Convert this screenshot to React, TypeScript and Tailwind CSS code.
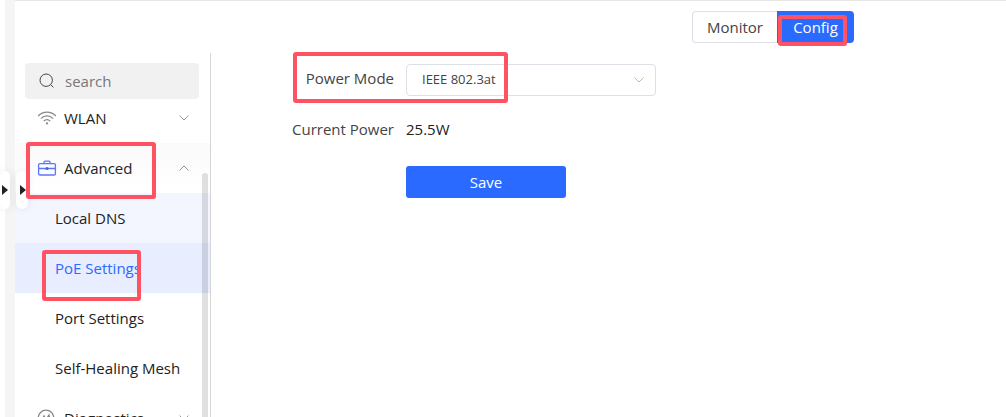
import React from "react";

const subItems = [
  { label: "Local DNS", className: "bg-[#f3f6ff] text-[#222]" },
  { label: "PoE Settings", className: "bg-[#e8edff] text-[#2b6aff]", marked: true },
  { label: "Port Settings", className: "text-[#222]" },
  { label: "Self-Healing Mesh", className: "text-[#222]" },
];

function Mark({ className }: { className: string }) {
  return (
    <span
      className={`pointer-events-none absolute z-20 rounded-[3px] border-4 border-[#ff5263] ${className}`}
    />
  );
}

function Chevron({ up, className }: { up?: boolean; className: string }) {
  return (
    <svg
      viewBox="0 0 12 8"
      fill="none"
      stroke="currentColor"
      className={className}
      aria-hidden="true"
    >
      <path d={up ? "M1.5 6.5 6 2l4.5 4.5" : "M1.5 1.5 6 6l4.5-4.5"} />
    </svg>
  );
}

function SearchIcon() {
  return (
    <svg viewBox="0 0 16 16" fill="none" stroke="#444" className="h-4 w-4 shrink-0" aria-hidden="true">
      <circle cx="7.2" cy="7.2" r="6.2" />
      <path d="m11.6 11.6 2.8 2.8" />
    </svg>
  );
}

function WifiIcon() {
  return (
    <svg viewBox="0 0 20 16" fill="none" stroke="#888" strokeWidth="1.3" className="h-4 w-5" aria-hidden="true">
      <path d="M1.2 6C6 .8 14 .8 18.8 6M3.9 8.6c3.4-3.6 8.8-3.6 12.2 0M6.7 11.1c1.9-1.9 4.7-1.9 6.6 0" />
      <circle cx="10" cy="13.4" r="1.1" fill="#888" stroke="none" />
    </svg>
  );
}

function BriefcaseIcon() {
  return (
    <svg viewBox="0 0 20 16" fill="none" stroke="#5b76ff" strokeWidth="1.3" className="h-4 w-5" aria-hidden="true">
      <rect x="1.6" y="3.6" width="16.8" height="11.4" rx="1.2" />
      <path d="M7 3.5V2.2q0-1 1-1h4q1 0 1 1v1.3M1.6 8.5h16.8" />
      <circle cx="10" cy="8.5" r="1.5" fill="#2b6aff" stroke="none" />
    </svg>
  );
}

function DiagnosticsIcon() {
  return (
    <svg viewBox="0 0 20 18" fill="none" stroke="#888" strokeWidth="1.3" className="h-[18px] w-5" aria-hidden="true">
      <circle cx="9" cy="9" r="7.8" />
      <path d="M4 10h1.5L7 7l2 3.5L12 6l1 4h1.5" />
    </svg>
  );
}

function Handle({ className }: { className: string }) {
  return (
    <button
      type="button"
      aria-label="Expand panel"
      className={`absolute top-[171px] z-10 flex h-[38px] items-center rounded-lg bg-white shadow-[0_0_8px_rgba(0,0,0,0.08)] ${className}`}
    >
      <svg viewBox="0 0 6 10" fill="#222" className="h-2.5 w-1.5" aria-hidden="true">
        <path d="M0 0 6 5 0 10z" />
      </svg>
    </button>
  );
}

function Sidebar() {
  return (
    <nav className="relative w-49 shrink-0 border-r border-[#d6d6d6] pt-2.5 text-[15px]">
      <label className="mr-[11px] ml-2.5 flex h-9 items-center gap-2.5 rounded bg-[#f1f1f1] px-3.5">
        <SearchIcon />
        <input
          type="text"
          placeholder="search"
          aria-label="search"
          className="w-full min-w-0 bg-transparent outline-none placeholder:text-[#777]"
        />
      </label>
      <button type="button" className="flex h-11 w-full items-center pr-5 pb-1.5 pl-[22px] text-[#222]">
        <WifiIcon />
        <span className="ml-[7px]">WLAN</span>
        <Chevron className="ml-auto h-2 w-3 text-[#8a98a8]" />
      </button>
      <div className="relative">
        <button type="button" className="flex h-[50px] w-full items-center bg-linear-to-b from-[#fafafa] to-white pr-5 pl-[22px] text-[#222]">
          <BriefcaseIcon />
          <span className="ml-[7px]">Advanced</span>
          <Chevron up className="ml-auto h-2 w-3 text-[#999]" />
        </button>
        <Mark className="-top-px left-[11px] h-[57px] w-[130px]" />
      </div>
      <ul>
        {subItems.map((item) => (
          <li key={item.label} className="relative">
            <a href="#" className={`flex h-[50px] items-center pl-10 ${item.className}`}>
              {item.label}
            </a>
            {item.marked && <Mark className="top-[7px] left-[27px] h-[51px] w-[99px]" />}
          </li>
        ))}
      </ul>
      <button type="button" className="flex h-[50px] w-full items-center pr-5 pl-[22px] text-[#222]">
        <DiagnosticsIcon />
        <span className="ml-[7px]">Diagnostics</span>
        <Chevron className="ml-auto h-2 w-3 text-[#999]" />
      </button>
      <div className="absolute top-[120px] right-0.5 bottom-0 w-1.5 rounded-t-full bg-black/12" />
    </nav>
  );
}

export default function App() {
  return (
    <div className="relative flex h-screen overflow-hidden bg-white pl-[5px] font-['Open_Sans','Noto_Sans',sans-serif] text-[15px]">
      <div className="w-2.5 shrink-0 bg-[#f5f5f5]" />
      <Handle className="left-0 w-2.5 pl-0.5" />
      <Handle className="left-4 w-3 pl-1" />
      <div className="flex min-w-0 flex-1 flex-col border-t border-[#e6e6e6]">
        <header className="flex h-[52px] shrink-0 justify-end pt-2.5 pr-38">
          <button
            type="button"
            className="h-8 w-[85px] rounded-l border border-r-0 border-[#dcdfe6] text-[#444]"
          >
            Monitor
          </button>
          <button type="button" className="relative h-8 w-[77px] rounded-r bg-[#2b6aff] text-white">
            Config
            <Mark className="top-1 left-px h-[31px] w-[69px]" />
          </button>
        </header>
        <div className="flex flex-1">
          <Sidebar />
          <main className="min-w-0 flex-1 pt-[11px]">
            <form className="grid grid-cols-[183px_1fr] items-center gap-x-3 gap-y-[19px] text-[#444]">
              <label htmlFor="power-mode" className="relative h-8 text-right leading-7">
                Power Mode
                <Mark className="-top-3 left-[82px] h-[51px] w-[215px]" />
              </label>
              <div className="relative w-[250px]">
                <select
                  id="power-mode"
                  className="h-8 w-full appearance-none rounded border border-[#dcdfe6] bg-white px-[15px] text-[13px]"
                >
                  <option>IEEE 802.3at</option>
                </select>
                <Chevron className="pointer-events-none absolute top-3 right-[11px] h-2 w-3 text-[#bbb]" />
              </div>
              <span className="h-8 text-right leading-7">Current Power</span>
              <span className="h-8 leading-7 text-[#222]">25.5W</span>
              <button type="button" className="col-start-2 h-8 w-40 rounded-[3px] bg-[#2b6aff] text-white">
                Save
              </button>
            </form>
          </main>
        </div>
      </div>
    </div>
  );
}
